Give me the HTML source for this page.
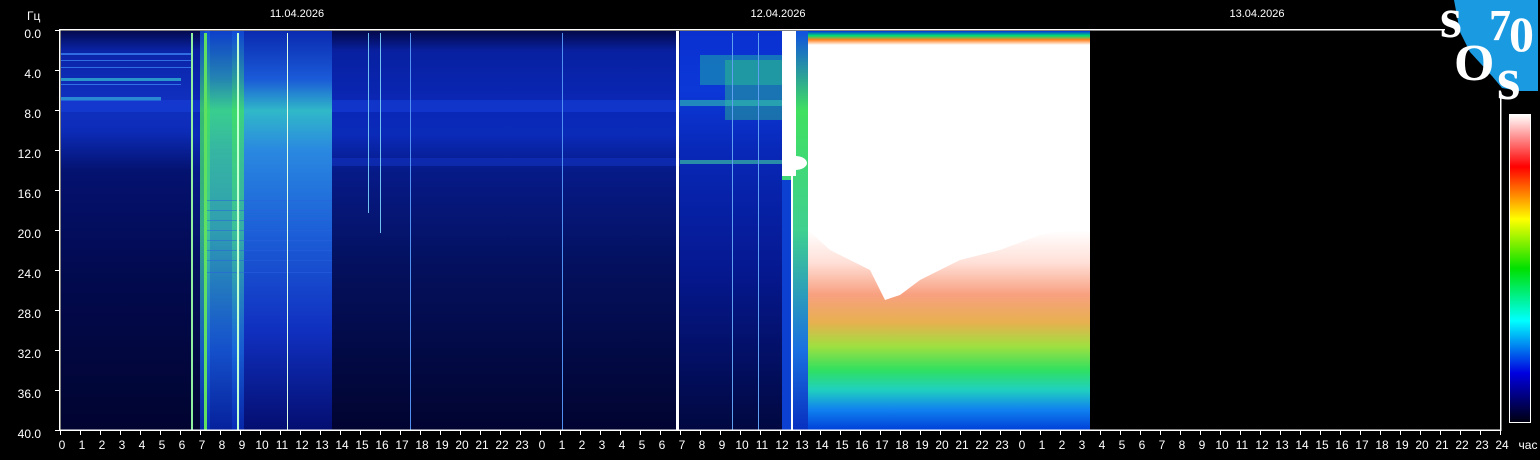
<!DOCTYPE html>
<html><head><meta charset="utf-8"><style>
html,body{margin:0;padding:0;background:#000;width:1540px;height:460px;overflow:hidden}
svg{display:block}
text{font-family:"Liberation Sans",Arial,sans-serif;fill:#fff}
</style></head><body>
<svg width="1540" height="460" viewBox="0 0 1540 460" xmlns="http://www.w3.org/2000/svg">
<defs>
<linearGradient id="base" x1="0" y1="0" x2="0" y2="1">
<stop offset="0" stop-color="#02084a"/><stop offset="0.05" stop-color="#0820a0"/><stop offset="0.2" stop-color="#0a28b8"/><stop offset="0.26" stop-color="#0a2ab8"/><stop offset="0.35" stop-color="#061a88"/><stop offset="0.6" stop-color="#04105c"/><stop offset="1" stop-color="#010430"/>
</linearGradient>
<linearGradient id="d1" x1="0" y1="0" x2="0" y2="1">
<stop offset="0" stop-color="#030a50"/><stop offset="0.05" stop-color="#0a24a8"/><stop offset="0.18" stop-color="#1030c0"/><stop offset="0.25" stop-color="#0c2cb8"/><stop offset="0.35" stop-color="#041270"/><stop offset="0.6" stop-color="#020a50"/><stop offset="1" stop-color="#010430"/>
</linearGradient>
<linearGradient id="band" x1="0" y1="0" x2="0" y2="1">
<stop offset="0" stop-color="#0a2ab0"/><stop offset="0.12" stop-color="#1a5ad8"/><stop offset="0.2" stop-color="#30b8c8"/><stop offset="0.3" stop-color="#2a88e0"/><stop offset="0.5" stop-color="#1c60d8"/><stop offset="0.75" stop-color="#1030c0"/><stop offset="1" stop-color="#040e70"/>
</linearGradient>
<linearGradient id="green" x1="0" y1="0" x2="0" y2="1">
<stop offset="0" stop-color="#1050e0"/><stop offset="0.2" stop-color="#40e060"/><stop offset="0.5" stop-color="#40d090"/><stop offset="0.8" stop-color="#1a70e0"/><stop offset="1" stop-color="#0830c0"/>
</linearGradient>
<linearGradient id="d2" x1="0" y1="0" x2="0" y2="1">
<stop offset="0" stop-color="#0a30d0"/><stop offset="0.15" stop-color="#0c38d8"/><stop offset="0.3" stop-color="#0828b8"/><stop offset="0.6" stop-color="#051890"/><stop offset="1" stop-color="#010840"/>
</linearGradient>
<linearGradient id="storm" x1="0" y1="0" x2="0" y2="1">
<stop offset="0" stop-color="#0030e0"/><stop offset="0.012" stop-color="#00e070"/><stop offset="0.022" stop-color="#ff8020"/><stop offset="0.035" stop-color="#ffffff"/><stop offset="0.5" stop-color="#ffffff"/><stop offset="0.58" stop-color="#ffe0d8"/><stop offset="0.66" stop-color="#f8a080"/><stop offset="0.73" stop-color="#e8b050"/><stop offset="0.79" stop-color="#a0e040"/><stop offset="0.85" stop-color="#30e060"/><stop offset="0.9" stop-color="#20d0c0"/><stop offset="0.95" stop-color="#1080f0"/><stop offset="1" stop-color="#0040d8"/>
</linearGradient>
<linearGradient id="cbar" x1="0" y1="0" x2="0" y2="1">
<stop offset="0" stop-color="#ffffff"/><stop offset="0.17" stop-color="#ff0000"/><stop offset="0.34" stop-color="#ffff00"/><stop offset="0.5" stop-color="#00e000"/><stop offset="0.67" stop-color="#00ffff"/><stop offset="0.84" stop-color="#0000e0"/><stop offset="1" stop-color="#000010"/>
</linearGradient>
</defs>

<rect x="61" y="31" width="1029" height="399" fill="url(#base)"/>
<rect x="61" y="31" width="130" height="399" fill="url(#d1)"/>
<g fill="#3a80f0" opacity="0.8">
<rect x="61" y="53" width="130" height="2"/><rect x="61" y="60" width="130" height="1"/><rect x="61" y="67" width="130" height="1"/>
<rect x="61" y="78" width="120" height="3" fill="#30b0d0"/><rect x="61" y="84" width="120" height="1"/>
<rect x="61" y="97" width="100" height="4" fill="#30a0d8"/>
</g>
<rect x="61" y="100" width="620" height="12" fill="#1840d8" opacity="0.55"/>
<rect x="330" y="158" width="350" height="8" fill="#1436c8" opacity="0.5"/>
<rect x="205" y="31" width="127" height="399" fill="url(#band)"/>
<rect x="205" y="31" width="35" height="399" fill="url(#green)" opacity="0.55"/>
<rect x="232" y="31" width="12" height="399" fill="url(#green)" opacity="0.7"/>
<rect x="200" y="31" width="10" height="399" fill="url(#green)" opacity="0.8"/>
<g fill="#2a60e0" opacity="0.5">
<rect x="205" y="200" width="127" height="1"/><rect x="205" y="210" width="127" height="1"/><rect x="205" y="220" width="127" height="1"/><rect x="205" y="230" width="127" height="1"/><rect x="205" y="240" width="127" height="1"/><rect x="205" y="250" width="127" height="1"/><rect x="205" y="260" width="127" height="1"/><rect x="205" y="272" width="127" height="1"/>
</g>
<g>
<rect x="191" y="33" width="2" height="397" fill="#90f0a0"/>
<rect x="204" y="33" width="3" height="397" fill="#60e060"/>
<rect x="237" y="33" width="2" height="397" fill="#c0ffd0"/>
<rect x="287" y="33" width="1" height="397" fill="#e0ffe0"/>
<rect x="368" y="33" width="1" height="180" fill="#70c0f0"/>
<rect x="380" y="33" width="1" height="200" fill="#70c0f0"/>
<rect x="410" y="33" width="1" height="397" fill="#5090f0"/>
<rect x="562" y="33" width="1" height="397" fill="#5090f0"/>
<rect x="732" y="33" width="1" height="397" fill="#60a0f0"/>
<rect x="758" y="33" width="1" height="397" fill="#60a0f0"/>
</g>
<rect x="680" y="31" width="102" height="399" fill="url(#d2)"/>
<rect x="700" y="55" width="82" height="30" fill="#20c0a0" opacity="0.45"/>
<rect x="725" y="60" width="57" height="60" fill="#30d080" opacity="0.4"/>
<rect x="680" y="100" width="102" height="6" fill="#30c0b0" opacity="0.6"/>
<rect x="680" y="160" width="102" height="4" fill="#40d0a0" opacity="0.6"/>
<rect x="732" y="33" width="1" height="397" fill="#60a0f0"/>
<rect x="758" y="33" width="1" height="397" fill="#60a0f0"/>
<rect x="676" y="31" width="3" height="399" fill="#ffffff"/>
<rect x="782" y="31" width="26" height="399" fill="url(#green)"/>
<rect x="782" y="180" width="9" height="250" fill="#0c40d0"/>
<rect x="782" y="31" width="14" height="145" fill="#ffffff"/>
<ellipse cx="795" cy="163" rx="12" ry="7" fill="#ffffff"/>
<rect x="791" y="170" width="2" height="260" fill="#ffffff"/>
<rect x="808" y="31" width="282" height="399" fill="url(#storm)"/>
<path d="M808 230 L830 250 L850 260 L870 270 L885 300 L900 295 L920 280 L960 260 L1000 250 L1040 235 L1090 225 L1090 180 L808 180Z" fill="#ffffff"/>
<g fill="#fff">
<rect x="60" y="29" width="1385" height="1.5"/>
<rect x="59" y="29" width="1.5" height="402"/>
<rect x="59" y="429.5" width="1442" height="1.5"/>
<rect x="1500" y="92" width="1.5" height="339"/>
</g>
<g stroke="#fff" stroke-width="1">
<path d="M55 30.5H60M55 70.5H60M55 110.5H60M55 150.5H60M55 190.5H60M55 230.5H60M55 270.5H60M55 310.5H60M55 350.5H60M55 390.5H60M55 430.5H60"/>
</g>
<g stroke="#fff" stroke-width="1">
<path d="M60.5 430v5M80.5 430v5M100.5 430v5M120.5 430v5M140.5 430v5M160.5 430v5M180.5 430v5M200.5 430v5M220.5 430v5M240.5 430v5M260.5 430v5M280.5 430v5M300.5 430v5M320.5 430v5M340.5 430v5M360.5 430v5M380.5 430v5M400.5 430v5M420.5 430v5M440.5 430v5M460.5 430v5M480.5 430v5M500.5 430v5M520.5 430v5M540.5 430v5M560.5 430v5M580.5 430v5M600.5 430v5M620.5 430v5M640.5 430v5M660.5 430v5M680.5 430v5M700.5 430v5M720.5 430v5M740.5 430v5M760.5 430v5M780.5 430v5M800.5 430v5M820.5 430v5M840.5 430v5M860.5 430v5M880.5 430v5M900.5 430v5M920.5 430v5M940.5 430v5M960.5 430v5M980.5 430v5M1000.5 430v5M1020.5 430v5M1040.5 430v5M1060.5 430v5M1080.5 430v5M1100.5 430v5M1120.5 430v5M1140.5 430v5M1160.5 430v5M1180.5 430v5M1200.5 430v5M1220.5 430v5M1240.5 430v5M1260.5 430v5M1280.5 430v5M1300.5 430v5M1320.5 430v5M1340.5 430v5M1360.5 430v5M1380.5 430v5M1400.5 430v5M1420.5 430v5M1440.5 430v5M1460.5 430v5M1480.5 430v5M1500.5 430v5"/>
</g>
<g font-size="12" text-anchor="end">
<text x="41" y="38">0.0</text><text x="41" y="78">4.0</text><text x="41" y="118">8.0</text><text x="41" y="158">12.0</text><text x="41" y="198">16.0</text><text x="41" y="238">20.0</text><text x="41" y="278">24.0</text><text x="41" y="318">28.0</text><text x="41" y="358">32.0</text><text x="41" y="398">36.0</text><text x="41" y="438">40.0</text>
</g>
<text x="27" y="20" font-size="12">Гц</text>
<g font-size="11" text-anchor="middle">
<text x="297" y="17">11.04.2026</text><text x="778" y="17">12.04.2026</text><text x="1257" y="17">13.04.2026</text>
</g>
<g font-size="12" text-anchor="middle">
<text x="62" y="449">0</text><text x="82" y="449">1</text><text x="102" y="449">2</text><text x="122" y="449">3</text><text x="142" y="449">4</text><text x="162" y="449">5</text><text x="182" y="449">6</text><text x="202" y="449">7</text><text x="222" y="449">8</text><text x="242" y="449">9</text><text x="262" y="449">10</text><text x="282" y="449">11</text><text x="302" y="449">12</text><text x="322" y="449">13</text><text x="342" y="449">14</text><text x="362" y="449">15</text><text x="382" y="449">16</text><text x="402" y="449">17</text><text x="422" y="449">18</text><text x="442" y="449">19</text><text x="462" y="449">20</text><text x="482" y="449">21</text><text x="502" y="449">22</text><text x="522" y="449">23</text>
<text x="542" y="449">0</text><text x="562" y="449">1</text><text x="582" y="449">2</text><text x="602" y="449">3</text><text x="622" y="449">4</text><text x="642" y="449">5</text><text x="662" y="449">6</text><text x="682" y="449">7</text><text x="702" y="449">8</text><text x="722" y="449">9</text><text x="742" y="449">10</text><text x="762" y="449">11</text><text x="782" y="449">12</text><text x="802" y="449">13</text><text x="822" y="449">14</text><text x="842" y="449">15</text><text x="862" y="449">16</text><text x="882" y="449">17</text><text x="902" y="449">18</text><text x="922" y="449">19</text><text x="942" y="449">20</text><text x="962" y="449">21</text><text x="982" y="449">22</text><text x="1002" y="449">23</text>
<text x="1022" y="449">0</text><text x="1042" y="449">1</text><text x="1062" y="449">2</text><text x="1082" y="449">3</text><text x="1102" y="449">4</text><text x="1122" y="449">5</text><text x="1142" y="449">6</text><text x="1162" y="449">7</text><text x="1182" y="449">8</text><text x="1202" y="449">9</text><text x="1222" y="449">10</text><text x="1242" y="449">11</text><text x="1262" y="449">12</text><text x="1282" y="449">13</text><text x="1302" y="449">14</text><text x="1322" y="449">15</text><text x="1342" y="449">16</text><text x="1362" y="449">17</text><text x="1382" y="449">18</text><text x="1402" y="449">19</text><text x="1422" y="449">20</text><text x="1442" y="449">21</text><text x="1462" y="449">22</text><text x="1482" y="449">23</text><text x="1502" y="449">24</text>
</g>
<text x="1528" y="449" font-size="12" text-anchor="middle">час</text>
<rect x="1509.5" y="114.5" width="21" height="308" fill="url(#cbar)" stroke="#fff" stroke-width="1"/>
<path d="M1454 0H1538V91H1520L1502 88L1492 76L1470 52L1460 32Z" fill="#1a9ae0"/>
<g font-weight="bold" style="font-family:'Liberation Serif',serif;font-weight:bold">
<text x="1440" y="37" font-size="56" style="font-family:'Liberation Serif',serif">s</text>
<text x="1489" y="40" font-size="44" style="font-family:'Liberation Serif',serif">7</text>
<text x="1509" y="51" font-size="50" style="font-family:'Liberation Serif',serif">0</text>
<text x="1454" y="80" font-size="52" style="font-family:'Liberation Serif',serif">O</text>
<text x="1497" y="99" font-size="60" style="font-family:'Liberation Serif',serif">s</text>
</g>
</svg>
</body></html>
